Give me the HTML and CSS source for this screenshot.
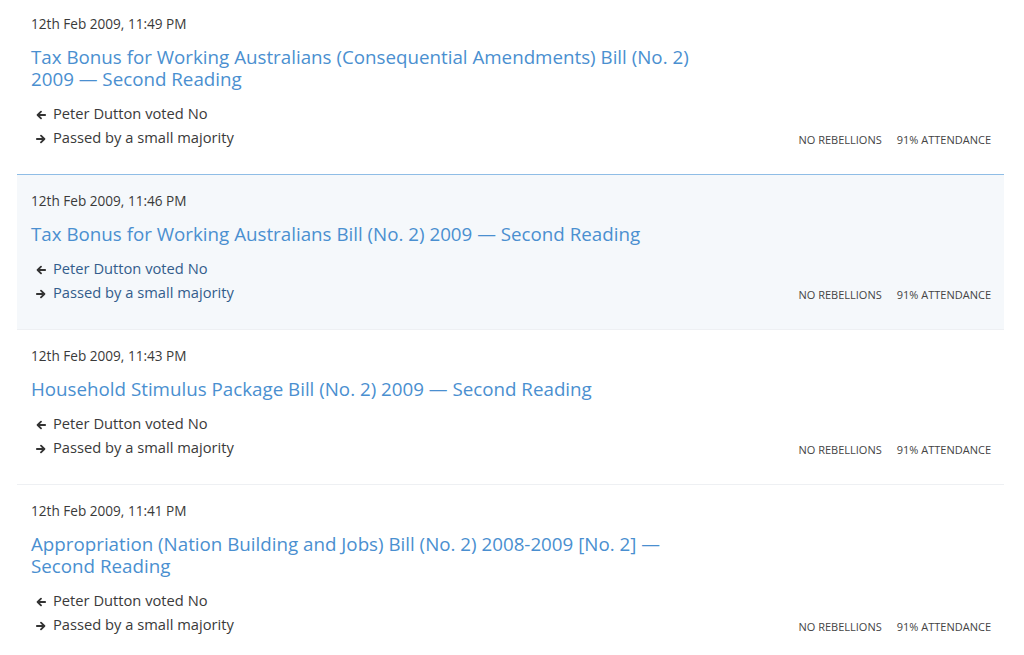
FILE: index.html
```html
<!DOCTYPE html>
<html lang="en">
<head>
<meta charset="utf-8">
<title>Votes</title>
<link rel="stylesheet" href="styles.css">
</head>
<body>
<ul class="votes">
  <li class="vote">
    <div class="vote-main">
      <p class="vote-date">12th Feb 2009, 11:49 PM</p>
      <h3 class="vote-title"><a href="#">Tax Bonus for Working Australians (Consequential Amendments) Bill (No. 2) 2009 — Second Reading</a></h3>
      <ul class="vote-summary">
        <li><svg class="arrow" viewBox="0 0 10 10"><path d="M9.2 5H1.8M5 1.6L1.6 5L5 8.4"/></svg>Peter Dutton voted No</li>
        <li><svg class="arrow" viewBox="0 0 10 10"><path d="M0.8 5H8.2M5 1.6L8.4 5L5 8.4"/></svg>Passed by a small majority</li>
      </ul>
    </div>
    <div class="vote-meta"><span>No rebellions</span><span>91% attendance</span></div>
  </li>
  <li class="vote vote--active">
    <div class="vote-main">
      <p class="vote-date">12th Feb 2009, 11:46 PM</p>
      <h3 class="vote-title"><a href="#">Tax Bonus for Working Australians Bill (No. 2) 2009 — Second Reading</a></h3>
      <ul class="vote-summary">
        <li><svg class="arrow" viewBox="0 0 10 10"><path d="M9.2 5H1.8M5 1.6L1.6 5L5 8.4"/></svg>Peter Dutton voted No</li>
        <li><svg class="arrow" viewBox="0 0 10 10"><path d="M0.8 5H8.2M5 1.6L8.4 5L5 8.4"/></svg>Passed by a small majority</li>
      </ul>
    </div>
    <div class="vote-meta"><span>No rebellions</span><span>91% attendance</span></div>
  </li>
  <li class="vote">
    <div class="vote-main">
      <p class="vote-date">12th Feb 2009, 11:43 PM</p>
      <h3 class="vote-title"><a href="#">Household Stimulus Package Bill (No. 2) 2009 — Second Reading</a></h3>
      <ul class="vote-summary">
        <li><svg class="arrow" viewBox="0 0 10 10"><path d="M9.2 5H1.8M5 1.6L1.6 5L5 8.4"/></svg>Peter Dutton voted No</li>
        <li><svg class="arrow" viewBox="0 0 10 10"><path d="M0.8 5H8.2M5 1.6L8.4 5L5 8.4"/></svg>Passed by a small majority</li>
      </ul>
    </div>
    <div class="vote-meta"><span>No rebellions</span><span>91% attendance</span></div>
  </li>
  <li class="vote">
    <div class="vote-main">
      <p class="vote-date">12th Feb 2009, 11:41 PM</p>
      <h3 class="vote-title"><a href="#">Appropriation (Nation Building and Jobs) Bill (No. 2) 2008-2009 [No. 2] — Second Reading</a></h3>
      <ul class="vote-summary">
        <li><svg class="arrow" viewBox="0 0 10 10"><path d="M9.2 5H1.8M5 1.6L1.6 5L5 8.4"/></svg>Peter Dutton voted No</li>
        <li><svg class="arrow" viewBox="0 0 10 10"><path d="M0.8 5H8.2M5 1.6L8.4 5L5 8.4"/></svg>Passed by a small majority</li>
      </ul>
    </div>
    <div class="vote-meta"><span>No rebellions</span><span>91% attendance</span></div>
  </li>
</ul>
</body>
</html>
```
FILE: styles.css
```css
html, body {
  margin: 0;
  padding: 0;
  background: #ffffff;
}
body {
  font-family: "Open Sans", "Noto Sans", sans-serif;
  color: #333333;
}
.votes {
  list-style: none;
  margin: -2px 20px 0 17px;
  padding: 0;
}
.vote {
  display: flex;
  justify-content: space-between;
  align-items: flex-end;
  padding: 16px 13px 25px 14px;
  border-top: 1px solid #eef0f3;
}
.vote:first-child {
  border-top: none;
}
.vote--active {
  background: #f5f8fb;
  border-top-color: #8fbde6;
}
.vote-main {
  max-width: 680px;
}
.vote-date {
  margin: 0;
  font-size: 13.6px;
  line-height: 20px;
  color: #3a3a3a;
}
.vote-title {
  margin: 12px 0 0;
  font-size: 18.75px;
  font-weight: 400;
  line-height: 22px;
}
.vote-title a {
  color: #4a8fd0;
  text-decoration: none;
}
.vote-summary {
  list-style: none;
  margin: 11px 0 0;
  padding: 0 0 0 4px;
  font-size: 14.7px;
  line-height: 24px;
  color: #3a3a3a;
}
.vote--active .vote-summary {
  color: #335d8c;
}
.arrow {
  width: 10px;
  height: 10px;
  margin: 0 7px 0 1px;
  vertical-align: -0.5px;
  fill: none;
  stroke: #333333;
  stroke-width: 1.8;
  stroke-linecap: round;
  stroke-linejoin: round;
}
.vote-meta {
  display: flex;
  gap: 15px;
  font-size: 11px;
  line-height: 18px;
  text-transform: uppercase;
  color: #444444;
  white-space: nowrap;
}
```
